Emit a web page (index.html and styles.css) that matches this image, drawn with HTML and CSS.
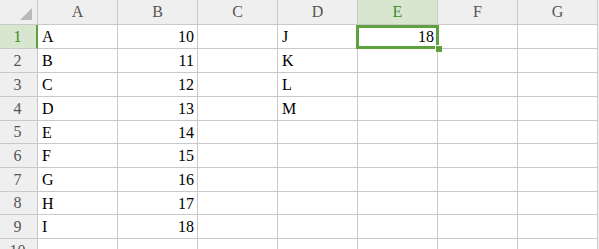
FILE: index.html
```html
<!DOCTYPE html>
<html>
<head>
<meta charset="utf-8">
<link rel="stylesheet" href="styles.css">
</head>
<body>
<div class="sheet">
  <div class="grid">
    <div class="corner"><span class="tri"></span></div>
    <div class="ch">A</div><div class="ch">B</div><div class="ch">C</div><div class="ch">D</div><div class="ch sel">E</div><div class="ch">F</div><div class="ch">G</div>

    <div class="rh sel">1</div><div class="c">A</div><div class="c n">10</div><div class="c"></div><div class="c">J</div><div class="c n">18</div><div class="c"></div><div class="c"></div>
    <div class="rh">2</div><div class="c">B</div><div class="c n">11</div><div class="c"></div><div class="c">K</div><div class="c"></div><div class="c"></div><div class="c"></div>
    <div class="rh">3</div><div class="c">C</div><div class="c n">12</div><div class="c"></div><div class="c">L</div><div class="c"></div><div class="c"></div><div class="c"></div>
    <div class="rh">4</div><div class="c">D</div><div class="c n">13</div><div class="c"></div><div class="c">M</div><div class="c"></div><div class="c"></div><div class="c"></div>
    <div class="rh">5</div><div class="c">E</div><div class="c n">14</div><div class="c"></div><div class="c"></div><div class="c"></div><div class="c"></div><div class="c"></div>
    <div class="rh">6</div><div class="c">F</div><div class="c n">15</div><div class="c"></div><div class="c"></div><div class="c"></div><div class="c"></div><div class="c"></div>
    <div class="rh">7</div><div class="c">G</div><div class="c n">16</div><div class="c"></div><div class="c"></div><div class="c"></div><div class="c"></div><div class="c"></div>
    <div class="rh">8</div><div class="c">H</div><div class="c n">17</div><div class="c"></div><div class="c"></div><div class="c"></div><div class="c"></div><div class="c"></div>
    <div class="rh">9</div><div class="c">I</div><div class="c n">18</div><div class="c"></div><div class="c"></div><div class="c"></div><div class="c"></div><div class="c"></div>
    <div class="rh">10</div><div class="c"></div><div class="c"></div><div class="c"></div><div class="c"></div><div class="c"></div><div class="c"></div><div class="c"></div>
  </div>
  <div class="selbox"><span class="handle"></span></div>
</div>
</body>
</html>
```
FILE: styles.css
```css
html, body {
  margin: 0;
  padding: 0;
  background: #f3f3f3;
  overflow: hidden;
}
.sheet {
  position: relative;
  width: 599px;
  height: 249px;
  overflow: hidden;
  font-family: "Liberation Serif", "Noto Sans CJK SC", serif;
}
.grid {
  display: grid;
  grid-template-columns: 38px repeat(7, 80px);
  grid-template-rows: 25px 24px 24px 24px 24px 23px 24px 24px 23px 24px 24px;
}
.grid > div {
  box-sizing: border-box;
  border-right: 1px solid #c9c9c9;
  border-bottom: 1px solid #c9c9c9;
}
.corner {
  background: #efefef;
  position: relative;
}
.tri {
  position: absolute;
  right: 5px;
  bottom: 4px;
  width: 12px;
  height: 12px;
  background: #b9b9b9;
  clip-path: polygon(100% 0, 100% 100%, 0 100%);
}
.ch {
  background: #efefef;
  color: #555;
  font-size: 16px;
  display: flex;
  align-items: center;
  justify-content: center;
  padding-bottom: 1px;
}
.ch.sel {
  background: #d8e6d0;
  color: #3d8a2a;
}
.rh {
  background: #efefef;
  color: #555;
  font-size: 16px;
  display: flex;
  align-items: center;
  justify-content: center;
  padding-right: 2px;
}
.rh.sel {
  background: #d8e6d0;
  color: #3d8a2a;
  border-right: 2px solid #5fa03f !important;
  padding-right: 1px;
}
.c {
  background: #fff;
  color: #000;
  font-size: 16px;
  display: flex;
  align-items: center;
  padding: 1px 3px 0 4px;
}
.c.n {
  justify-content: flex-end;
}
.selbox {
  position: absolute;
  left: 356px;
  top: 25px;
  width: 83px;
  height: 24px;
  box-sizing: border-box;
  border: 3px solid #5fa03f;
}
.handle {
  position: absolute;
  right: -6px;
  bottom: -6px;
  width: 6px;
  height: 6px;
  background: #5fa03f;
  border-left: 1px solid #fff;
  border-top: 1px solid #fff;
}
```
